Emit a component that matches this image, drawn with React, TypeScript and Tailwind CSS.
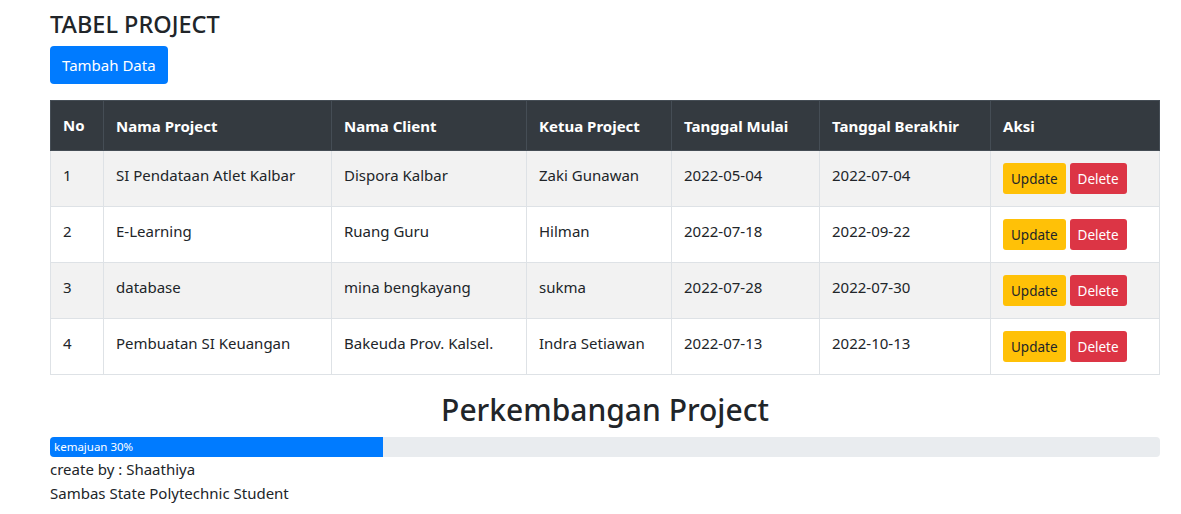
const rows = [
  { no: 1, name: "SI Pendataan Atlet Kalbar", client: "Dispora Kalbar", lead: "Zaki Gunawan", start: "2022-05-04", end: "2022-07-04" },
  { no: 2, name: "E-Learning", client: "Ruang Guru", lead: "Hilman", start: "2022-07-18", end: "2022-09-22" },
  { no: 3, name: "database", client: "mina bengkayang", lead: "sukma", start: "2022-07-28", end: "2022-07-30" },
  { no: 4, name: "Pembuatan SI Keuangan", client: "Bakeuda Prov. Kalsel.", lead: "Indra Setiawan", start: "2022-07-13", end: "2022-10-13" },
];

export default function App() {
  return (
    <div className="min-h-[514px] bg-white text-[#212529] font-['Noto_Sans','Open_Sans',sans-serif] text-[15px] leading-6">
      <div className="mx-[50px] w-[1110px] pt-[10px]">
        <h4 className="mb-2 text-[23.5px] font-medium leading-[1.2]">TABEL PROJECT</h4>
        <button className="h-[38px] rounded-[4px] bg-[#007bff] px-3 text-[15px] text-white">Tambah Data</button>

        {/* tabel */}
        <table className="mt-4 mb-4 w-full border-collapse text-left">
          <thead className="bg-[#343a40] text-white">
            <tr>
              <th className="w-[53px] border border-[#454d55] p-3 pb-[13px] font-bold">No</th>
              <th className="w-[228px] border border-[#454d55] p-3 font-bold">Nama Project</th>
              <th className="w-[195px] border border-[#454d55] p-3 font-bold">Nama Client</th>
              <th className="w-[145px] border border-[#454d55] p-3 font-bold">Ketua Project</th>
              <th className="w-[148px] border border-[#454d55] p-3 font-bold">Tanggal Mulai</th>
              <th className="w-[171px] border border-[#454d55] p-3 font-bold">Tanggal Berakhir</th>
              <th className="border border-[#454d55] p-3 font-bold">Aksi</th>
            </tr>
          </thead>
          <tbody>
            {rows.map((r) => (
              <tr key={r.no} className={r.no % 2 === 1 ? "bg-[#f2f2f2]" : "bg-white"}>
                <td className="h-[56px] border border-[#dee2e6] px-3 pt-3 align-top">{r.no}</td>
                <td className="border border-[#dee2e6] px-3 pt-3 align-top">{r.name}</td>
                <td className="border border-[#dee2e6] px-3 pt-3 align-top">{r.client}</td>
                <td className="border border-[#dee2e6] px-3 pt-3 align-top">{r.lead}</td>
                <td className="border border-[#dee2e6] px-3 pt-3 align-top">{r.start}</td>
                <td className="border border-[#dee2e6] px-3 pt-3 align-top">{r.end}</td>
                <td className="border border-[#dee2e6] px-3 pt-[12px] align-top">
                  <div className="flex gap-1">
                    <button className="h-[31px] rounded-[3px] bg-[#ffc107] px-2 text-[13.5px] text-[#212529]">Update</button>
                    <button className="h-[31px] rounded-[3px] bg-[#dc3545] px-2 text-[13.5px] text-white">Delete</button>
                  </div>
                </td>
              </tr>
            ))}
          </tbody>
        </table>

        <h2 className="mb-2 text-center text-[30px] font-medium leading-[38px]">Perkembangan Project</h2>
        <div className="flex h-5 overflow-hidden rounded-[4px] bg-[#e9ecef]">
          <div className="flex w-[30%] items-center bg-[#007bff] pl-1 text-[11.5px] text-white">kemajuan 30%</div>
        </div>
        <p>create by : Shaathiya</p>
        <p>Sambas State Polytechnic Student</p>
      </div>
    </div>
  );
}
